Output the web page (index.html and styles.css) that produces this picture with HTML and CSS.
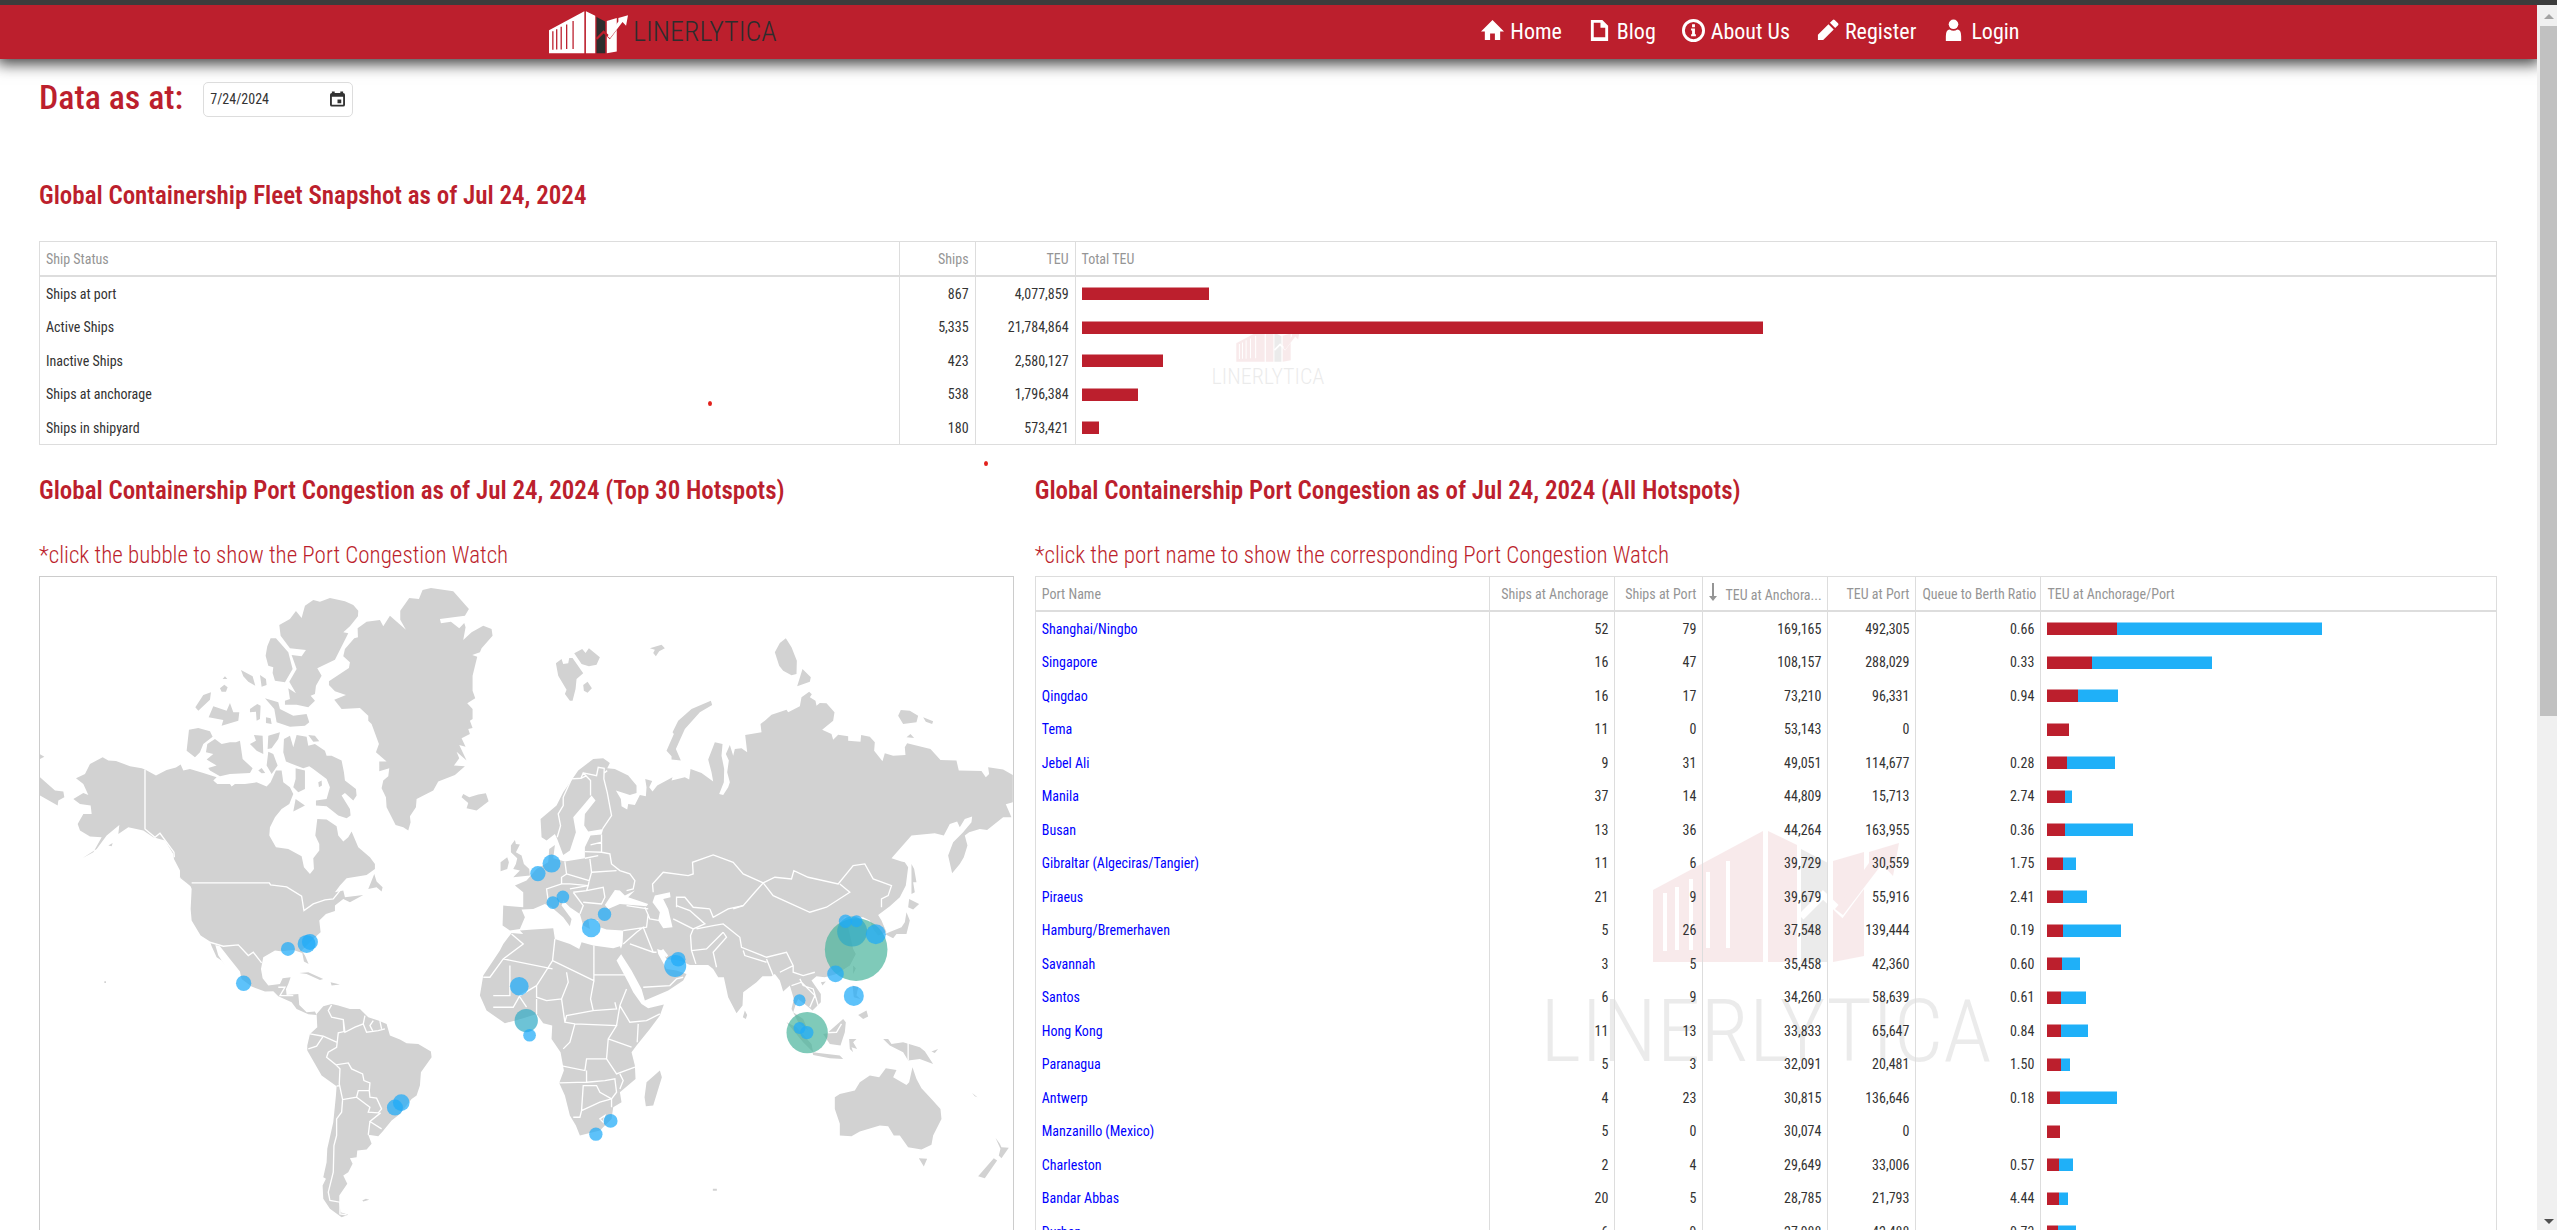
FILE: index.html
```html
<!DOCTYPE html>
<html lang="en">
<head>
<meta charset="utf-8">
<title>Linerlytica</title>
<link rel="stylesheet" href="styles.css">
</head>
<body>
<svg class="sprite" aria-hidden="true">
  <symbol id="mark" viewBox="0 0 246 132">
    <path class="panel" d="M0 59 110 0V131H0ZM115 0 144 14V131H115ZM180 30 211 21V125L180 131Z"/>
    <path class="dark" d="M148 18 175 32V131H148Z"/>
    <path class="slit" d="M12 62V120M24 56V119M38 48V119M55 41V117M75 30V117"/>
    <path class="zig" d="M148 86 170 64 189 82 226 32"/>
    <path class="arrow" d="M189 70 216 32V21L246 12 240 45 229 33 190 84 182 78Z"/>
  </symbol>
</svg>
<div class="topline"></div>
<div class="page">
  <div class="content">
    <header class="navbar">
      <a class="brand" href="#"><svg class="brand-mark"><use href="#mark"/></svg><span>LINERLYTICA</span></a>
      <nav>
        <a href="#"><svg viewBox="0 0 24 24"><path d="M12 1 24 13H20V22H14.500V15H9.500V22H4V13H0Z"/></svg>Home</a>
        <a href="#"><svg viewBox="0 0 24 24"><path fill-rule="evenodd" d="M3 1H15L21 7V23H3ZM6 4V19H18V9H13V4Z"/></svg>Blog</a>
        <a href="#"><svg viewBox="0 0 24 24"><path fill-rule="evenodd" d="M12 0A12 12 0 1 1 12 24 12 12 0 0 1 12 0ZM12 3A9 9 0 1 0 12 21 9 9 0 0 0 12 3ZM10.500 5.500H13.500V8.500H10.500ZM9.500 10H13.500V16H14.500V18H9.500V16H10.500V12H9.500Z"/></svg>About Us</a>
        <a href="#"><svg viewBox="0 0 24 24"><path d="M2 16.500 13 5.500 18.500 11 7.500 22H2ZM14.500 4 17.500 1Q18.500 0 19.500 1L23 4.500Q24 5.500 23 6.500L20 9.500Z"/></svg>Register</a>
        <a href="#"><svg viewBox="0 0 24 24"><circle cx="12" cy="5.500" r="5"/><path d="M4 23V18Q4 11 8 11Q12 13.500 16 11Q20 11 20 18V23Z"/></svg>Login</a>
      </nav>
    </header>
    <main>
      <form class="date-row">
        <label for="asof">Data as at:</label>
        <div class="date-box">
          <input id="asof" type="text" value="7/24/2024">
          <svg viewBox="0 0 16 16"><path fill-rule="evenodd" d="M2 1.500V0H5V1.500H11V0H14V1.500Q16 1.500 16 3.500V14Q16 16 14 16H2Q0 16 0 14V3.500Q0 1.500 2 1.500ZM2 5.500V14H14V5.500ZM8 8.500H12V12.500H8Z"/></svg>
        </div>
      </form>

      <h2>Global Containership Fleet Snapshot as of Jul 24, 2024</h2>
      <div class="grid-box fleet">
        <div class="watermark"><svg><use href="#mark"/></svg><span>LINERLYTICA</span></div>
        <table>
          <colgroup><col class="c-status"><col class="c-ships"><col class="c-teu"><col></colgroup>
          <thead><tr><th>Ship Status</th><th class="n">Ships</th><th class="n">TEU</th><th>Total TEU</th></tr></thead>
          <tbody>
            <tr><td>Ships at port</td><td class="n">867</td><td class="n">4,077,859</td><td><div class="bar"><i style="width:127px"></i></div></td></tr>
            <tr><td>Active Ships</td><td class="n">5,335</td><td class="n">21,784,864</td><td><div class="bar"><i style="width:681px"></i></div></td></tr>
            <tr><td>Inactive Ships</td><td class="n">423</td><td class="n">2,580,127</td><td><div class="bar"><i style="width:81px"></i></div></td></tr>
            <tr><td>Ships at anchorage</td><td class="n">538</td><td class="n">1,796,384</td><td><div class="bar"><i style="width:56px"></i></div></td></tr>
            <tr><td>Ships in shipyard</td><td class="n">180</td><td class="n">573,421</td><td><div class="bar"><i style="width:17px"></i></div></td></tr>
          </tbody>
        </table>
        <span class="dot dot-a"></span><span class="dot dot-b"></span>
      </div>

      <div class="columns">
        <section>
          <h2>Global Containership Port Congestion as of Jul 24, 2024 (Top 30 Hotspots)</h2>
          <p>*click the bubble to show the Port Congestion Watch</p>
          <div class="map">
          <svg viewBox="30 24 2919 2040" role="img" aria-label="World map of port congestion">
            <g class="land">
              <!-- North America -->
              <path d="M218 565 235 575 258 576 300 592 335 598 345 602 378 620 410 603 438 596 452 587 460 605 480 600 520 612 560 625 550 635 562 645 600 645 605 653 615 645 645 645 680 640 710 653 722 640 738 605 755 605 760 640 780 655 790 675 778 705 755 720 735 745 720 775 718 800 738 835 775 840 815 862 822 895 840 915 852 900 850 868 868 845 868 825 856 800 862 750 890 752 920 772 925 800 940 818 955 805 965 788 985 835 1020 865 1035 885 1035 900 1010 918 950 928 930 950 915 970 940 965 945 985 1000 978 960 1000 940 990 915 1010 915 1026 888 1035 868 1055 872 1090 855 1105 815 1145 825 1160 836 1185 822 1178 817 1152 790 1143 752 1147 735 1145 700 1165 693 1200 698 1228 715 1250 750 1245 758 1228 782 1225 775 1245 768 1260 770 1278 805 1275 808 1308 830 1330 855 1328 860 1338 835 1336 800 1320 785 1300 745 1282 730 1267 705 1268 665 1253 635 1230 630 1208 600 1170 570 1132 556 1128 565 1160 597 1207 575 1175 560 1165 545 1132 540 1118 512 1100 485 1055 482 1020 485 960 480 945 450 925 450 905 432 870 430 855 405 815 370 805 340 785 295 775 265 795 268 768 230 800 200 840 158 867 190 850 215 805 180 803 150 785 143 765 160 735 185 735 182 710 150 705 130 690 160 672 175 678 160 645 138 628 165 615 180 585Z"/>
              <path d="M30 625 75 665 100 668 103 685 85 695 83 710 30 680ZM30 556 43 563 30 570ZM235 830 248 822 245 832ZM1015 960 1033 915 1040 938 1058 955 1055 968 1040 955ZM448 925 480 938 497 965 470 942ZM808 1212 835 1210 880 1230 870 1233 830 1215ZM902 1240 930 1247 905 1250Z"/>
              <!-- Canadian Arctic islands -->
              <path d="M825 110 850 93 870 98 900 87 945 97 970 108 985 125 984 142 960 172 940 190 955 193 915 272 862 298 875 320 858 350 855 375 842 380 855 395 835 415 800 407 765 407 765 395 780 390 775 358 798 373 778 338 800 300 785 258 815 262 828 243 780 238 752 200 748 168 780 150 798 126 815 147Z"/>
              <path d="M722 208 738 208 775 250 788 300 765 340 735 335 728 312 730 295 715 290 707 260 712 232ZM633 303 668 322 676 350 655 338 640 322ZM690 318 708 330 710 348 695 353ZM496 415 520 378 543 370 540 392 505 425ZM536 445 550 412 590 425 600 402 610 430 628 430 625 455 575 470 580 453ZM660 420 682 405 692 410 690 450 680 455 678 428 660 430ZM705 388 745 400 750 420 790 440 830 435 838 460 825 470 780 473 740 460 733 420ZM708 445 722 448 725 465 708 462ZM477 482 505 477 540 487 548 503 520 525 510 550 495 565 470 545ZM528 550 532 525 555 510 575 525 600 520 618 520 630 515 638 570 668 598 660 612 600 615 570 622 540 605 535 597 560 590 530 572 550 555ZM660 525 678 515 672 498 698 500 700 555 680 545ZM715 500 750 490 745 510 725 538 713 540ZM715 548 730 555 743 590 725 615 710 590ZM762 510 780 500 790 535 800 498 830 503 835 530 855 525 885 545 890 560 905 560 935 575 942 610 945 635 978 660 980 680 970 695 945 672 935 680 960 720 962 740 950 748 925 740 890 712 858 710 858 695 890 690 900 655 890 630 850 600 838 592 820 598 768 578 760 550ZM835 498 855 500 868 517 850 518ZM797 598 825 605 825 660 805 670 790 655 797 630ZM790 728 797 690 825 710 815 715ZM570 358 583 347 593 355 588 368 575 368ZM578 330 585 322 592 330ZM865 640 875 635 876 650 867 655ZM685 605 695 597 706 612 695 613Z"/>
              <!-- Greenland and Iceland -->
              <path d="M1138 87 1167 90 1178 63 1203 57 1270 67 1317 120 1305 140 1230 150 1233 163 1263 158 1288 178 1303 162 1307 175 1300 213 1325 190 1360 170 1385 180 1388 200 1355 238 1350 250 1327 258 1342 263 1328 320 1328 365 1336 388 1312 403 1328 420 1328 450 1320 455 1328 477 1315 480 1320 495 1295 508 1307 533 1288 528 1310 575 1280 548 1288 568 1272 590 1305 592 1275 618 1225 638 1210 665 1160 690 1158 715 1140 742 1142 760 1135 785 1120 775 1097 768 1070 715 1068 685 1055 658 1060 635 1075 622 1078 598 1048 607 1048 578 1070 578 1038 550 1047 525 1025 465 1015 455 1015 440 990 417 935 420 913 392 948 378 915 367 897 348 897 337 957 297 960 280 940 262 945 240 973 208 984 205 983 178 1010 158 1050 153 1060 172 1080 140 1128 182 1111 152 1111 125ZM1295 685 1300 675 1318 685 1345 677 1368 673 1376 697 1340 725 1310 718 1315 702Z"/>
              <!-- British Isles -->
              <path d="M1443 830 1455 813 1458 825 1470 827 1458 850 1475 860 1482 885 1498 900 1500 920 1450 925 1470 905 1450 900 1458 885 1462 868 1443 850ZM1412 880 1432 865 1437 880 1432 900 1412 907Z"/>
              <!-- South America -->
              <path transform="translate(0 960)" d="M905 345 925 350 960 360 990 360 1015 385 1045 395 1070 405 1080 440 1110 452 1130 463 1165 465 1203 488 1205 505 1173 550 1170 590 1160 620 1145 630 1110 675 1085 695 1058 728 1045 742 1015 738 1025 765 1010 782 982 785 980 805 960 808 968 825 955 850 940 860 952 885 928 920 928 942 932 970 955 978 935 985 900 960 880 930 878 890 888 870 880 865 890 820 892 780 910 700 918 620 920 592 875 560 832 485 832 470 840 435 862 415 860 375 880 352ZM997 935 1008 930 1018 933 1000 938ZM223 277h5v5h-5Z"/>
              <g transform="translate(1470 0)">
                <!-- Europe and Asia -->
                <path d="M62 750 110 710 130 670 175 605 220 570 250 568 270 582 262 598 285 600 325 620 350 650 350 672 330 678 288 665 303 690 305 712 322 722 325 705 345 708 360 678 378 682 380 655 376 630 397 636 388 655 398 668 412 650 458 625 455 635 495 625 508 632 512 600 545 612 580 638 575 610 565 572 585 520 608 525 605 560 613 600 612 640 598 675 610 678 625 655 630 640 622 610 627 575 618 555 630 528 640 560 645 540 665 538 682 550 676 498 725 490 722 465 735 455 755 437 800 422 805 430 840 412 845 385 868 368 876 376 870 385 887 395 890 410 900 402 920 403 944 430 940 455 907 482 935 495 940 512 955 497 985 502 985 515 1022 518 1024 498 1050 503 1065 520 1063 545 1088 577 1095 553 1120 560 1157 558 1155 535 1162 523 1232 540 1262 573 1310 575 1317 605 1385 606 1398 625 1408 615 1405 595 1450 602 1479 618V700L1458 706 1475 745 1450 745 1402 783 1380 780 1348 790 1335 800 1343 830 1332 865 1320 885 1297 913 1285 860 1300 820 1330 790 1355 760 1357 743 1335 750 1320 775 1312 758 1290 765 1272 800 1245 793 1175 800 1115 868 1145 878 1155 880 1165 895 1158 950 1140 985 1110 1012 1075 1038 1085 1055 1100 1090 1075 1100 1060 1080 1050 1055 1030 1045 1000 1045 975 1045 960 1060 985 1075 1000 1140 1008 1155 990 1190 950 1215 915 1225 890 1222 875 1235 903 1275 903 1300 878 1325 860 1310 835 1290 828 1305 820 1330 850 1350 865 1385 835 1360 815 1320 822 1290 810 1250 790 1268 780 1235 765 1215 755 1222 728 1222 710 1240 670 1270 668 1310 650 1333 625 1285 612 1225 595 1225 580 1200 565 1188 510 1188 480 1175 440 1170 425 1145 412 1140 415 1155 440 1200 470 1205 500 1215 490 1235 445 1265 375 1295 365 1260 335 1205 300 1150 308 1125 310 1085 260 1082 240 1075 235 1055 205 1050 210 1080 190 1070 180 1035 150 1015 130 995 125 1010 155 1050 150 1072 130 1045 95 1015 75 1005 40 1020 5 1022 15 1045 0 1080-30 1085-52 1070-50 1010 10 1015 10 970-15 950 20 935 50 900 85 880 88 840 105 828 100 868 135 878 195 868 195 835 212 800 245 797 250 780 205 788 193 770 195 735 227 695 215 680 190 710 160 745 168 790 150 845 130 858 112 810 105 795 80 815 65 805Z"/>
                <!-- Arctic islands -->
                <path d="M108 283 125 270 130 285 145 283 148 267 158 267 190 313 170 330 167 360 158 395 150 395 135 375 140 362 115 320ZM163 253 187 240 197 252 207 238 240 265 230 287 207 292 185 285ZM190 348 203 338 216 358 203 371 192 365ZM390 238 425 227 435 238 418 247 408 262 400 252 405 242ZM765 250 780 222 798 208 815 235 831 275 830 315 815 319 790 305 778 290ZM848 300 873 325 870 338 832 352ZM440 545 462 495 458 490 475 455 515 420 550 405 573 395 577 408 540 430 495 480 468 540 483 575 455 572 455 562ZM1135 440 1143 423 1170 425 1195 440 1190 460 1150 465ZM1210 445 1240 457 1237 465 1218 458ZM1160 505 1172 495 1183 507ZM1175 885 1183 900 1190 940 1180 940 1185 970 1175 975Z"/>
                <g transform="translate(0 960)">
                  <!-- Africa -->
                  <path d="M-25 132 10 135 0 125 40 122 100 118 105 150 150 165 178 180 185 160 220 170 280 178 300 172 308 190 290 215 325 280 340 310 365 345 385 358 432 347 420 380 390 420 350 470 335 490 345 530 347 570 300 610 305 640 280 655 275 690 240 725 180 740 168 710 150 680 135 620 118 582 132 545 122 490 95 450 97 410 70 403 50 375 10 388-45 403-100 365-120 320-110 260-60 185-50 165ZM420 545 426 565 400 650 378 652 374 625 380 580Z"/>
                  <!-- Islands of Asia -->
                  <path d="M675 365 682 378 678 390 669 385ZM1168 30 1198 45 1180 62 1165 55ZM1160 70 1170 95 1160 135 1130 135 1120 148 1095 135 1145 115 1155 100ZM1000 230 1008 238 1000 255ZM903 280 918 278 908 290ZM998 290 1015 295 1010 320 1022 330 1002 325ZM1015 378 1040 365 1045 383 1030 390ZM910 435 925 430 970 390 978 400 975 430 962 470 930 465ZM800 400 830 415 875 465 880 490 850 460ZM878 490 960 500 970 510 930 508 880 498ZM988 450 1010 450 1000 460 1012 480 995 475 1000 490 990 480ZM1090 450 1105 450 1115 465 1150 460 1200 475 1215 487 1240 525 1200 510 1165 515 1150 490 1110 470ZM1235 488 1255 480 1245 492ZM1357 612 1373 625 1365 622Z"/>
                  <!-- Australia and New Zealand -->
                  <path d="M945 625 960 615 1005 605 1020 580 1050 560 1078 565 1098 538 1130 543 1120 565 1160 588 1168 580 1178 535 1190 570 1205 598 1235 630 1262 660 1265 690 1240 740 1235 768 1205 782 1165 775 1140 740 1122 740 1105 712 1080 710 1020 728 995 742 960 740 960 705 945 660ZM1197 808 1222 810 1212 833ZM1427 747 1440 765 1445 775 1467 777 1445 808 1437 800 1442 780ZM1422 808 1432 815 1395 868 1375 862ZM579 900h12v6h-12Z"/>
                </g>
              </g>
            </g>
            <g class="sea" transform="translate(1470 960)">
              <path d="M255 48 285 3 300 5 315 20 345 5 325 25 385 45 380 52 300 45 265 60ZM398 40 405 20 450 10 452 25 430 30 445 60 458 115 430 118 415 95 420 70ZM415 190 440 205 445 200 430 180Z"/>
            </g>
            <g class="border">
              <path d="M345 602V780L375 805 390 793 432 850 433 865M485 942H718L722 948 770 954 815 982 822 1025 850 1005 885 993 910 990 930 965M540 1120 580 1132 625 1128 655 1160 670 1150 695 1182M745 1255 765 1255 750 1280 790 1280"/>
              <path transform="translate(0 960)" d="M905 348 895 365 905 385 940 392 945 430 975 415 1000 405 1005 380M1000 405 1010 430 1045 425 1065 420M1030 395 1020 410 1028 425M1050 397 1055 420M940 392 942 428 925 432 920 475 895 490 890 505 918 528 955 522 965 540 998 555 1002 575 1020 582 1018 605 985 605 980 625 938 632 928 585 930 540 918 528M840 435 880 442 920 460M880 442 860 472 835 480M920 592 928 590M938 632 935 670 920 690 920 740 912 770 910 850 895 910 900 935 930 940 930 975 950 978M980 625 1020 655 1015 670 1045 672 1055 660 1040 628 1020 625 1018 605M1052 672 1020 698 1055 720M1020 698 1015 738"/>
              <path transform="translate(1470 0)" d="M112 805 122 770 115 735 130 710 130 685 155 630 183 628 190 612 212 635 212 680M190 612 230 620 235 595 253 598 252 630 262 670 275 740 248 780M183 628 200 620M262 605 253 612M245 797 245 820 212 828M245 820 245 850 195 848M245 850 270 855 275 885 300 905 330 915 345 935 340 960 320 965M135 878 140 915 125 925 125 945M210 870 215 910 208 935 140 915M195 868 235 860M215 910 290 905M208 935 205 950 150 945 125 945 80 960 85 995M150 960 205 950 200 965 160 970M160 970 190 1010 180 1035M200 965 250 955 255 985 245 1005 190 1000M400 970 398 945 430 910 505 920 520 915 518 880 580 858 640 880 670 915 730 942 705 970 670 1010 640 1020M730 942 765 925 815 930 822 905 865 925 955 945 1000 890 1035 885 1060 930 1115 950 1105 980 1085 990 1085 1015M730 942 760 980 870 1030 920 1015 990 970 960 945M470 1015 470 985 495 985 520 1015 570 1020M320 1010 385 1020"/>
              <path transform="translate(1470 960)" d="M470 50 510 65 555 105 520 120 460 90M570 60 580 85 625 60 670 50M530 120 580 110 610 105 660 145 665 175 740 205 800 190 820 230 780 250M670 185 675 200 740 220M610 130 620 145 580 190 590 235M515 185 560 180 610 130M515 185 512 140 520 120M515 185 528 225M740 210 760 260M820 230 820 250 850 260 885 250M815 290 845 280 885 320 870 355M840 270 850 290 880 300 895 350M310 165 350 130 370 115 400 190M330 165 400 190 410 190M375 55 390 90 420 95M385 75 380 115 310 125M370 295 450 290 470 270 490 265M105 150 98 215 222 275V170M222 258H320M222 275 212 330 220 365 290 360 285 340M98 215 50 290 50 325 80 335 125 330 145 280 140 250M98 240 -50 210M-25 135 10 165-50 210 -90 265-110 265M-30 230V320L-80 320M-80 355-20 355 0 320 50 290M20 355 0 325M50 330 50 375M125 330 135 400 165 405 290 410 265 450 260 510 200 510 195 545 122 530M220 365 140 380 135 400M165 405 150 460 130 480M290 410 300 350 320 300M300 350 330 400 380 395 420 375M355 405 352 460M265 450 335 475M260 510 290 555 345 535M200 545 200 580 118 582M200 580 255 575 285 570 290 610 275 630 240 610 230 590 190 590 185 665 180 685 160 685M185 665 240 640 275 630 275 655M300 555 310 575 300 600M240 690 255 680 250 700ZM1165 462V515M912 432 950 430 965 405"/>
            </g>
            <g class="bubbles">
              <circle cx="2479" cy="1142" r="94" class="big"/><circle cx="2332" cy="1391" r="62" class="big"/>
              <circle cx="2467" cy="1088" r="45" class="mid"/><circle cx="1489" cy="1355" r="35" class="mid"/>
              <circle cx="1565" cy="884" r="27"/><circle cx="1524" cy="914" r="23"/><circle cx="1599" cy="984" r="19"/><circle cx="1569" cy="1001" r="19"/>
              <circle cx="1724" cy="1036" r="20"/><circle cx="1684" cy="1077" r="28"/><circle cx="1945" cy="1171" r="22"/><circle cx="1936" cy="1191" r="33"/>
              <circle cx="2447" cy="1057" r="20"/><circle cx="2480" cy="1057" r="18"/><circle cx="2538" cy="1096" r="30"/><circle cx="2417" cy="1215" r="25"/>
              <circle cx="2472" cy="1281" r="30"/><circle cx="2309" cy="1294" r="18"/><circle cx="2309" cy="1377" r="18"/><circle cx="2331" cy="1391" r="20"/>
              <circle cx="1742" cy="1656" r="21"/><circle cx="1698" cy="1696" r="20"/><circle cx="1468" cy="1252" r="28"/><circle cx="1499" cy="1399" r="19"/>
              <circle cx="774" cy="1140" r="21"/><circle cx="830" cy="1125" r="27"/><circle cx="840" cy="1119" r="24"/><circle cx="641" cy="1243" r="23"/>
              <circle cx="1095" cy="1616" r="24"/><circle cx="1114" cy="1601" r="25"/>
            </g>
          </svg>
          </div>
        </section>

        <section>
          <h2>Global Containership Port Congestion as of Jul 24, 2024 (All Hotspots)</h2>
          <p>*click the port name to show the corresponding Port Congestion Watch</p>
          <div class="grid-box ports">
            <div class="watermark"><svg><use href="#mark"/></svg><span>LINERLYTICA</span></div>
            <table>
              <colgroup><col><col class="c-anch"><col class="c-port"><col class="c-anch"><col class="c-port"><col class="c-anch"><col></colgroup>
              <thead><tr><th>Port Name</th><th class="n">Ships at Anchorage</th><th class="n">Ships at Port</th><th class="n"><svg class="sort" viewBox="0 0 8 18"><path d="M3 0H5V13H8L4 18 0 13H3Z"/></svg>TEU at Anchora...</th><th class="n">TEU at Port</th><th class="n">Queue to Berth Ratio</th><th>TEU at Anchorage/Port</th></tr></thead>
              <tbody>
                <tr><td><a href="#">Shanghai/Ningbo</a></td><td class="n">52</td><td class="n">79</td><td class="n">169,165</td><td class="n">492,305</td><td class="n">0.66</td><td><div class="bar"><i style="width:70px"></i><b style="width:205px"></b></div></td></tr>
                <tr><td><a href="#">Singapore</a></td><td class="n">16</td><td class="n">47</td><td class="n">108,157</td><td class="n">288,029</td><td class="n">0.33</td><td><div class="bar"><i style="width:45px"></i><b style="width:120px"></b></div></td></tr>
                <tr><td><a href="#">Qingdao</a></td><td class="n">16</td><td class="n">17</td><td class="n">73,210</td><td class="n">96,331</td><td class="n">0.94</td><td><div class="bar"><i style="width:31px"></i><b style="width:40px"></b></div></td></tr>
                <tr><td><a href="#">Tema</a></td><td class="n">11</td><td class="n">0</td><td class="n">53,143</td><td class="n">0</td><td class="n"></td><td><div class="bar"><i style="width:22px"></i></div></td></tr>
                <tr><td><a href="#">Jebel Ali</a></td><td class="n">9</td><td class="n">31</td><td class="n">49,051</td><td class="n">114,677</td><td class="n">0.28</td><td><div class="bar"><i style="width:20px"></i><b style="width:48px"></b></div></td></tr>
                <tr><td><a href="#">Manila</a></td><td class="n">37</td><td class="n">14</td><td class="n">44,809</td><td class="n">15,713</td><td class="n">2.74</td><td><div class="bar"><i style="width:18px"></i><b style="width:7px"></b></div></td></tr>
                <tr><td><a href="#">Busan</a></td><td class="n">13</td><td class="n">36</td><td class="n">44,264</td><td class="n">163,955</td><td class="n">0.36</td><td><div class="bar"><i style="width:18px"></i><b style="width:68px"></b></div></td></tr>
                <tr><td><a href="#">Gibraltar (Algeciras/Tangier)</a></td><td class="n">11</td><td class="n">6</td><td class="n">39,729</td><td class="n">30,559</td><td class="n">1.75</td><td><div class="bar"><i style="width:16px"></i><b style="width:13px"></b></div></td></tr>
                <tr><td><a href="#">Piraeus</a></td><td class="n">21</td><td class="n">9</td><td class="n">39,679</td><td class="n">55,916</td><td class="n">2.41</td><td><div class="bar"><i style="width:16px"></i><b style="width:24px"></b></div></td></tr>
                <tr><td><a href="#">Hamburg/Bremerhaven</a></td><td class="n">5</td><td class="n">26</td><td class="n">37,548</td><td class="n">139,444</td><td class="n">0.19</td><td><div class="bar"><i style="width:16px"></i><b style="width:58px"></b></div></td></tr>
                <tr><td><a href="#">Savannah</a></td><td class="n">3</td><td class="n">5</td><td class="n">35,458</td><td class="n">42,360</td><td class="n">0.60</td><td><div class="bar"><i style="width:15px"></i><b style="width:18px"></b></div></td></tr>
                <tr><td><a href="#">Santos</a></td><td class="n">6</td><td class="n">9</td><td class="n">34,260</td><td class="n">58,639</td><td class="n">0.61</td><td><div class="bar"><i style="width:14px"></i><b style="width:25px"></b></div></td></tr>
                <tr><td><a href="#">Hong Kong</a></td><td class="n">11</td><td class="n">13</td><td class="n">33,833</td><td class="n">65,647</td><td class="n">0.84</td><td><div class="bar"><i style="width:14px"></i><b style="width:27px"></b></div></td></tr>
                <tr><td><a href="#">Paranagua</a></td><td class="n">5</td><td class="n">3</td><td class="n">32,091</td><td class="n">20,481</td><td class="n">1.50</td><td><div class="bar"><i style="width:14px"></i><b style="width:9px"></b></div></td></tr>
                <tr><td><a href="#">Antwerp</a></td><td class="n">4</td><td class="n">23</td><td class="n">30,815</td><td class="n">136,646</td><td class="n">0.18</td><td><div class="bar"><i style="width:13px"></i><b style="width:57px"></b></div></td></tr>
                <tr><td><a href="#">Manzanillo (Mexico)</a></td><td class="n">5</td><td class="n">0</td><td class="n">30,074</td><td class="n">0</td><td class="n"></td><td><div class="bar"><i style="width:13px"></i></div></td></tr>
                <tr><td><a href="#">Charleston</a></td><td class="n">2</td><td class="n">4</td><td class="n">29,649</td><td class="n">33,006</td><td class="n">0.57</td><td><div class="bar"><i style="width:12px"></i><b style="width:14px"></b></div></td></tr>
                <tr><td><a href="#">Bandar Abbas</a></td><td class="n">20</td><td class="n">5</td><td class="n">28,785</td><td class="n">21,793</td><td class="n">4.44</td><td><div class="bar"><i style="width:12px"></i><b style="width:9px"></b></div></td></tr>
                <tr><td><a href="#">Durban</a></td><td class="n">6</td><td class="n">9</td><td class="n">27,988</td><td class="n">42,488</td><td class="n">0.73</td><td><div class="bar"><i style="width:11px"></i><b style="width:18px"></b></div></td></tr>
              </tbody>
            </table>
          </div>
        </section>
      </div>
    </main>
  </div>
  <div class="scrollbar" aria-hidden="true"><span class="up"></span><span class="thumb"></span><span class="down"></span></div>
</div>
</body>
</html>
```
FILE: styles.css
```css
* { box-sizing: border-box; }
body {
  margin: 0;
  height: 100vh;
  display: flex;
  flex-direction: column;
  overflow: hidden;
  background: #fff;
  color: #333;
  font: 400 14px/20px "Roboto Condensed", "Liberation Sans", sans-serif;
}
a { text-decoration: none; }
.sprite { position: absolute; width: 0; height: 0; }
.topline { flex: none; height: 5px; background: #3c3c3c; }
.page { flex: 1; min-height: 0; display: flex; }
.content { flex: 1; min-width: 0; overflow: hidden; }

.panel { fill: var(--panel); }
.dark { fill: var(--dark); }
.slit { fill: none; stroke: var(--gap); stroke-width: 4; }
.zig { fill: none; stroke: var(--gap); stroke-width: 7; }
.arrow { fill: var(--panel); }

.navbar {
  --panel: #fff; --dark: #2d2d2d; --gap: #bc1f2d;
  position: relative;
  display: flex;
  align-items: center;
  justify-content: space-between;
  height: 54px;
  padding: 0 20.4% 0 549px;
  background: #bc1f2d;
  box-shadow: 0 2px 14px 3px rgba(0, 0, 0, .75);
}
.brand { display: flex; align-items: center; gap: 5px; color: #2d2d2d; font-size: 28px; font-weight: 300; line-height: 40px; }
.brand-mark { width: 79px; height: 43px; }
nav { display: flex; gap: 26px; }
nav a { display: flex; align-items: center; gap: 6px; color: #fff; font-size: 22px; line-height: 30px; }
nav svg { width: 23px; height: 23px; margin-bottom: 3px; fill: #fff; }

main { padding: 18px 40px 0 39px; }
.date-row { display: flex; align-items: flex-start; gap: 20px; height: 44px; margin-bottom: 50px; }
.date-row label { color: #bc1f2d; font-size: 34px; font-weight: 500; line-height: 40px; }
.date-box { display: flex; align-items: center; width: 150px; height: 35px; margin-top: 5px; padding: 0 7px 2px 6px; border: 1px solid #ddd; border-radius: 5px; }
.date-box input { flex: 1; min-width: 0; border: 0; padding: 0; background: none; color: #333; font: inherit; }
.date-box svg { width: 15px; height: 16px; fill: #333; }

h2 { margin: 0; color: #bc1f2d; font-size: 25px; font-weight: 600; line-height: 50px; }
p { margin: 20px 0 0; color: #bc1f2d; font-size: 23px; font-weight: 300; line-height: 40px; }

.grid-box { position: relative; border: 1px solid #ddd; }
.fleet { margin-top: 20px; }
table { position: relative; width: 100%; table-layout: fixed; border-collapse: separate; border-spacing: 0; }
th, td { height: 33px; padding: 0 6px; text-align: left; white-space: nowrap; border-right: 1px solid #ddd; font-weight: 400; }
tr:nth-child(even) td { height: 34px; }
th:last-child, td:last-child { border-right: 0; }
th { height: 35px; color: #959595; border-bottom: 2px solid #ddd; }
.n { text-align: right; }
td a { color: #00f; }
.c-status { width: 35%; }
.c-ships { width: 76px; }
.c-teu { width: 100px; }
.c-anch { width: 125px; }
.c-port { width: 88px; }
.bar { display: flex; height: 13px; }
.bar i { background: #bc1f2d; border-top: 1px solid #dc8f96; }
.bar b { background: #1fb0f8; border-top: 1px solid #8fd7fb; }
.sort { width: 8px; height: 18px; margin-right: 8px; vertical-align: -1px; fill: #959595; }

.watermark {
  --panel: #bc1f2d; --dark: #2d2d2d; --gap: #fff;
  position: absolute;
  inset: 0;
  display: flex;
  flex-direction: column;
  align-items: center;
  justify-content: center;
  color: #2d2d2d;
  opacity: .09;
  font-weight: 300;
}
.fleet .watermark { padding-top: 34px; font-size: 22px; line-height: 30px; }
.fleet .watermark svg { width: 64px; height: 34px; }
.ports .watermark { font-size: 88px; line-height: 136px; padding-top: 104px; }
.ports .watermark svg { width: 246px; height: 132px; margin-left: 20px; }

.dot { position: absolute; width: 4px; height: 5px; border-radius: 50%; background: #e2211c; }
.dot-a { left: 668px; top: 159px; }
.dot-b { left: 944px; top: 219px; }

.columns { display: grid; grid-template-columns: 2fr 3fr; column-gap: 21px; margin-top: 21px; }
.map { border: 1px solid #ccc; }
.map svg { display: block; width: 100%; }
.land { fill: #d2d2d2; }
.sea { fill: #fff; }
.border { fill: none; stroke: #fff; stroke-width: 4; }
.bubbles { fill: #1faaf8; fill-opacity: .72; }
.bubbles .big { fill: #48b49b; fill-opacity: .7; }
.bubbles .mid { fill: #2fa9c4; fill-opacity: .7; }

.scrollbar { flex: none; display: flex; flex-direction: column; align-items: center; width: 20px; padding: 9px 0 6px 3px; background: #f0f0f0; }
.scrollbar span { flex: none; }
.up { border: 5px solid transparent; border-top: 0; border-bottom-color: #a3a3a3; }
.thumb { width: 100%; height: 57%; margin: 7px 0 auto; background: #c1c1c1; }
.down { border: 5px solid transparent; border-bottom: 0; border-top-color: #505050; }
```
